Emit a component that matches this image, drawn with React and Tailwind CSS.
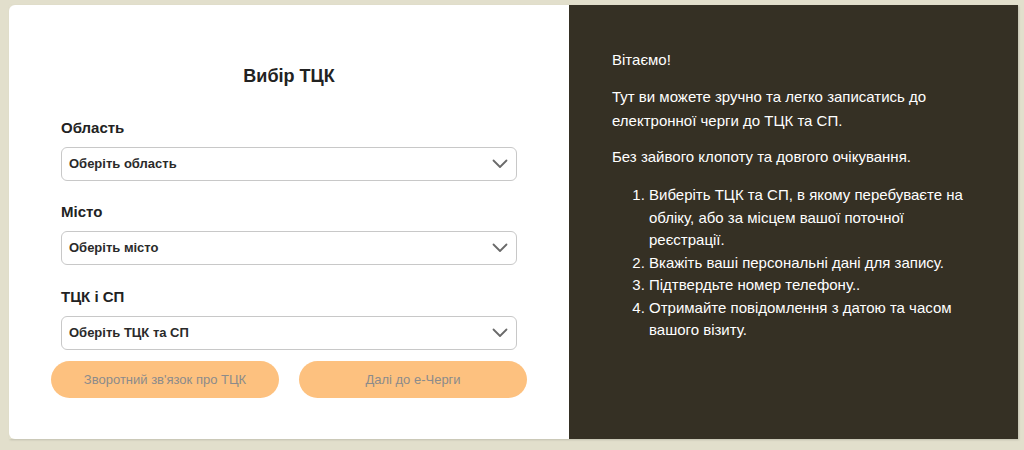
import { useState } from "react";

function Chevron() {
  return (
    <svg width="16" height="10" viewBox="0 0 16 10" fill="none">
      <polyline points="1.5,1.5 8,8 14.5,1.5" stroke="#6a6a6a" strokeWidth="1.8" strokeLinecap="round" strokeLinejoin="round" />
    </svg>
  );
}

function Select({ label, placeholder, top }) {
  return (
    <div className={"w-full " + top}>
      <div className="text-[15px] leading-[20px] font-bold text-[#222]">{label}</div>
      <div className="mt-[9px] h-[34px] w-full rounded-[6px] border border-[#c8c8c8] bg-white flex items-center justify-between pl-[7px] pr-[8px]">
        <span className="text-[13px] font-bold text-[#2a2a2a]">{placeholder}</span>
        <Chevron />
      </div>
    </div>
  );
}

export default function App() {
  const [obl] = useState("Оберіть область");

  return (
    <div className="h-[450px] w-full bg-[#e2dfcc] pt-[5px] pl-[9px] font-['Liberation_Sans',Arial,sans-serif]">
      <div className="flex h-[434px] w-[1009px] shadow-[1px_1px_2px_rgba(0,0,0,0.15)]">
        {/* Форма */}
        <div className="w-[560px] rounded-l-[6px] bg-white flex flex-col items-center pt-[58px]">
          <h1 className="text-[18px] leading-[27px] font-bold text-[#222]">Вибір ТЦК</h1>
          <div className="w-[456px] flex flex-col">
            <Select label="Область" placeholder={obl} top="mt-[28px]" />
            <Select label="Місто" placeholder="Оберіть місто" top="mt-[21px]" />
            <Select label="ТЦК і СП" placeholder="Оберіть ТЦК та СП" top="mt-[22px]" />
          </div>
          <div className="mt-[11px] flex gap-[20px]">
            <button className="h-[37px] w-[228px] rounded-full bg-[#fdc17f] text-[13px] text-[#8b8b8b]">
              Зворотний зв'язок про ТЦК
            </button>
            <button className="h-[37px] w-[228px] rounded-full bg-[#fdc17f] text-[13px] text-[#8b8b8b]">
              Далі до е-Черги
            </button>
          </div>
        </div>

        {/* Інформація */}
        <div className="flex-1 bg-[#353024] text-white pl-[43px] pr-[50px] pt-[43px] text-[15px]">
          <p className="leading-[24px]">Вітаємо!</p>
          <p className="mt-[13px] leading-[24px]">
            Тут ви можете зручно та легко записатись до
            <br />
            електронної черги до ТЦК та СП.
          </p>
          <p className="mt-[12px] leading-[24px]">Без зайвого клопоту та довгого очікування.</p>
          <ol className="mt-[15px] list-decimal pl-[37px] leading-[22.5px]">
            <li>Виберіть ТЦК та СП, в якому перебуваєте на обліку, або за місцем вашої поточної реєстрації.</li>
            <li>Вкажіть ваші персональні дані для запису.</li>
            <li>Підтвердьте номер телефону..</li>
            <li>Отримайте повідомлення з датою та часом вашого візиту.</li>
          </ol>
        </div>
      </div>
    </div>
  );
}
